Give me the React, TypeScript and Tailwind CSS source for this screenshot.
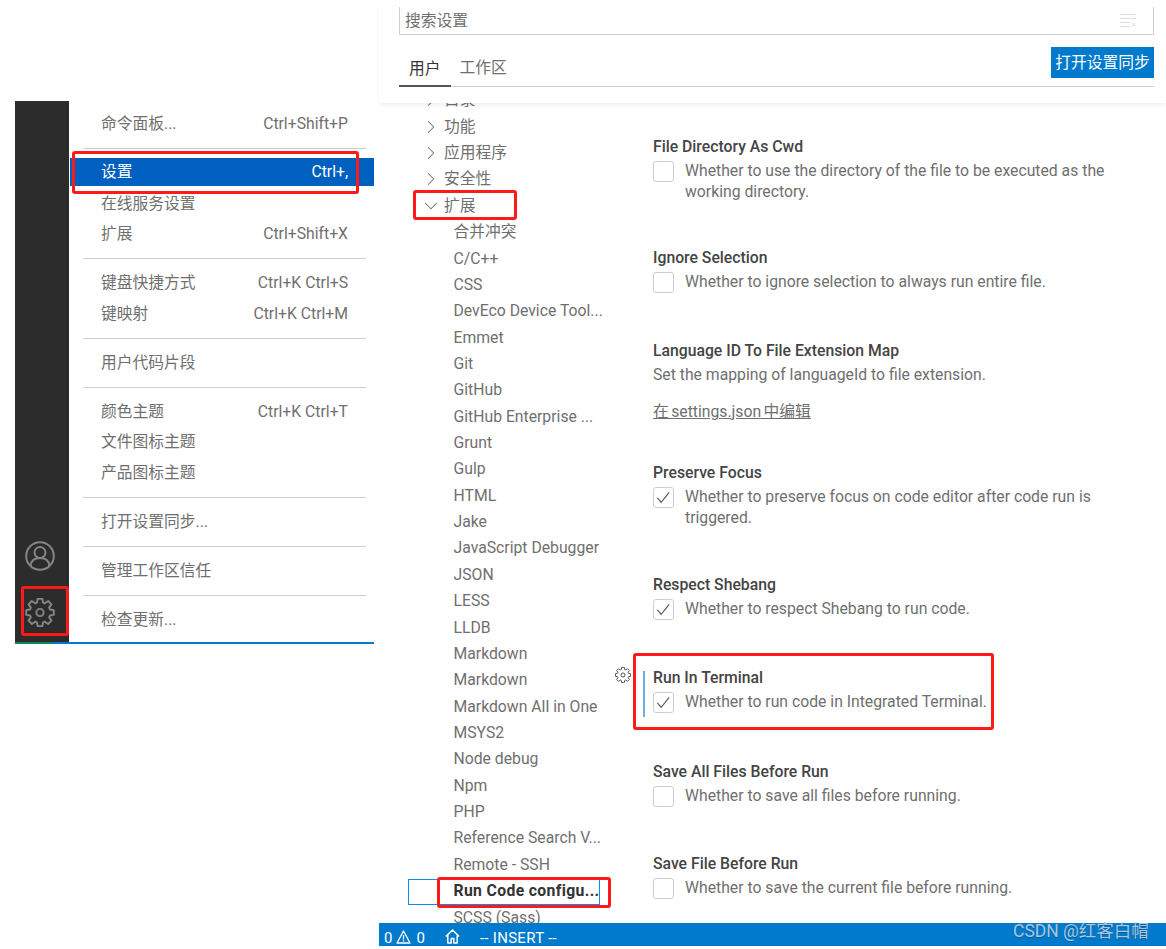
import { Fragment } from 'react'
import clsx from 'clsx'
import { ChevronRight, ChevronDown } from 'lucide-react'

const menuGroups = [
  [{ label: '命令面板...', keys: 'Ctrl+Shift+P' }],
  [
    { label: '设置', keys: 'Ctrl+,', active: true },
    { label: '在线服务设置' },
    { label: '扩展', keys: 'Ctrl+Shift+X' },
  ],
  [
    { label: '键盘快捷方式', keys: 'Ctrl+K Ctrl+S' },
    { label: '键映射', keys: 'Ctrl+K Ctrl+M' },
  ],
  [{ label: '用户代码片段' }],
  [
    { label: '颜色主题', keys: 'Ctrl+K Ctrl+T' },
    { label: '文件图标主题' },
    { label: '产品图标主题' },
  ],
  [{ label: '打开设置同步...' }],
  [{ label: '管理工作区信任' }],
  [{ label: '检查更新...' }],
]

const treeGroups = ['目录', '功能', '应用程序', '安全性']

const treeChildren = [
  '合并冲突',
  'C/C++',
  'CSS',
  'DevEco Device Tool...',
  'Emmet',
  'Git',
  'GitHub',
  'GitHub Enterprise ...',
  'Grunt',
  'Gulp',
  'HTML',
  'Jake',
  'JavaScript Debugger',
  'JSON',
  'LESS',
  'LLDB',
  'Markdown',
  'Markdown',
  'Markdown All in One',
  'MSYS2',
  'Node debug',
  'Npm',
  'PHP',
  'Reference Search V...',
  'Remote - SSH',
  'Run Code configu...',
  'SCSS (Sass)',
]

const settings = [
  {
    title: 'File Directory As Cwd',
    desc: 'Whether to use the directory of the file to be executed as the working directory.',
    height: 'h-[111px]',
    box: 'off',
  },
  {
    title: 'Ignore Selection',
    desc: 'Whether to ignore selection to always run entire file.',
    height: 'h-[93px]',
    box: 'off',
  },
  {
    title: 'Language ID To File Extension Map',
    desc: 'Set the mapping of languageId to file extension.',
    height: 'h-[122px]',
    link: '在 settings.json 中编辑',
  },
  {
    title: 'Preserve Focus',
    desc: 'Whether to preserve focus on code editor after code run is triggered.',
    height: 'h-[112px]',
    box: 'on',
  },
  {
    title: 'Respect Shebang',
    desc: 'Whether to respect Shebang to run code.',
    height: 'h-[93px]',
    box: 'on',
  },
  {
    title: 'Run In Terminal',
    desc: 'Whether to run code in Integrated Terminal.',
    height: 'h-[94px]',
    box: 'on',
    focused: true,
  },
  {
    title: 'Save All Files Before Run',
    desc: 'Whether to save all files before running.',
    height: 'h-[92px]',
    box: 'off',
  },
  {
    title: 'Save File Before Run',
    desc: 'Whether to save the current file before running.',
    height: 'h-[60px]',
    box: 'off',
  },
]

// 8 toothed cog outline, the shape of the editor's gear icon
function gearPath() {
  const pts: string[] = []
  for (let i = 0; i < 8; i++) {
    const a = (i * Math.PI) / 4
    const offsets: [number, number][] = [
      [-0.3, 8.6],
      [-0.17, 11.6],
      [0.17, 11.6],
      [0.3, 8.6],
    ]
    offsets.forEach(([d, r]) => {
      pts.push(`${(12 + r * Math.sin(a + d)).toFixed(2)} ${(12 - r * Math.cos(a + d)).toFixed(2)}`)
    })
  }
  return `M${pts.join('L')}Z`
}

function GearIcon({ className, width = 1.6 }: { className?: string; width?: number }) {
  return (
    <svg viewBox="0 0 24 24" fill="none" stroke="currentColor" strokeWidth={width} strokeLinejoin="round" className={className}>
      <path d={gearPath()} />
      <circle cx="12" cy="12" r="3" />
    </svg>
  )
}

function AccountIcon({ className }: { className?: string }) {
  return (
    <svg viewBox="0 0 30 30" fill="none" stroke="currentColor" strokeWidth="2" className={className}>
      <circle cx="15" cy="15" r="13.800" />
      <circle cx="15" cy="11.500" r="5.500" />
      <path d="M5.500 25c.5-5.500 4-8 9.500-8s9 2.500 9.500 8" />
    </svg>
  )
}

function ClearIcon() {
  return (
    <svg viewBox="0 0 16 13" fill="none" stroke="#dcdcdc" strokeWidth="1" className="w-4 h-[13px]">
      <path d="M0 .5h16M0 4.500h16M0 8.500h10M0 12.500h10M12 9l3.500 3.500M15.500 9 12 12.500" />
    </svg>
  )
}

function WarningIcon() {
  return (
    <svg viewBox="0 0 15 14" fill="none" stroke="white" strokeWidth="1.300" className="w-[15px] h-[14px]">
      <path d="M7.500 1 14 13H1z" strokeLinejoin="round" />
      <path d="M7.500 5v4.500M7.500 10.300v1.300" />
    </svg>
  )
}

function HomeIcon() {
  return (
    <svg viewBox="0 0 15 15" fill="none" stroke="white" strokeWidth="1.500" strokeLinejoin="round" className="w-[15px] h-[15px]">
      <path d="M.8 7.500 7.500 1l6.700 6.500M2.800 6v8h3.400V9.500h2.600V14h3.400V6" />
    </svg>
  )
}

function Checkbox({ checked }: { checked: boolean }) {
  return (
    <span className="shrink-0 w-[21px] h-[21px] border border-[#cecece] rounded-[3px] flex items-center justify-center">
      {checked && (
        <svg viewBox="0 0 20 20" fill="none" stroke="#5a5a5a" strokeWidth="1.200" className="w-[19px] h-[19px]">
          <path d="M3.500 10.500 7.500 15 16 4.500" />
        </svg>
      )}
    </span>
  )
}

function TreeRow({ label, open }: { label: string; open?: boolean }) {
  const Chevron = open ? ChevronDown : ChevronRight
  return (
    <div className="h-[26.37px] flex items-center pl-[41px] text-[#6f6f6f]">
      <Chevron className="w-[22px] h-[22px] shrink-0" strokeWidth={1.1} />
      <span className="ml-[2px]">{label}</span>
    </div>
  )
}

function Menu() {
  return (
    <div className="flex-1 pl-px pt-[8px] text-[#6f6f6f]">
      {menuGroups.map((group, i) => (
        <Fragment key={i}>
          {i > 0 && (
            <div className="h-[18.500px] flex items-center pl-[13px] pr-2">
              <div className="w-full h-px bg-[#cfcfcf]" />
            </div>
          )}
          {group.map(item => (
            <div
              key={item.label}
              className={clsx(
                'flex items-center justify-between pl-[31px] pr-[26px]',
                item.active ? 'h-[28px] mb-[2.500px] bg-[#0060c0] text-white' : 'h-[30.500px]'
              )}
            >
              <span>{item.label}</span>
              {item.keys && <span>{item.keys}</span>}
            </div>
          ))}
        </Fragment>
      ))}
    </div>
  )
}

function Setting({ item }: { item: (typeof settings)[number] }) {
  return (
    <div className={clsx('relative', item.height)}>
      {item.focused && (
        <>
          <GearIcon className="absolute left-[-38px] top-0 w-4 h-4 text-[#555]" width={1.5} />
          <div className="absolute left-[-10px] top-[4px] w-[2px] h-[46px] bg-[#6cb0e6]" />
        </>
      )}
      <div className="h-[22px] leading-[22px] font-medium text-[#444]">{item.title}</div>
      {item.box ? (
        <div className="flex items-start gap-[11px] mt-[3px]">
          <Checkbox checked={item.box === 'on'} />
          <p className="w-[430px] -mt-px leading-[21px] text-[#6f6f6f]">{item.desc}</p>
        </div>
      ) : (
        <>
          <p className="leading-[24px] mt-[1px] text-[#6f6f6f]">{item.desc}</p>
          <a className="block mt-[13px] leading-[24px] underline [word-spacing:-1.500px] text-[#6f6f6f]">{item.link}</a>
        </>
      )}
    </div>
  )
}

export default function App() {
  return (
    <div className="relative w-[1166px] h-[949px] overflow-hidden bg-white flex font-['Roboto','Noto_Sans_CJK_SC',sans-serif] text-[15.750px]">
      {/* Left: manage menu */}
      <div className="w-[379px] shrink-0 pl-[15px] pr-[5px] pt-[101px]">
        <div className="h-[541px] flex">
          <div className="w-[54px] bg-[#2c2c2c] flex flex-col items-center justify-end gap-[27px] pb-[15px] pr-[4px] text-[#858585]">
            <AccountIcon className="w-[30px] h-[30px]" />
            <GearIcon className="w-[30px] h-[29px]" />
          </div>
          <Menu />
        </div>
        <div className="h-[2px] bg-[#007acc] flex">
          <div className="w-[37px] bg-[#16825d]" />
        </div>
      </div>

      {/* Right: settings editor */}
      <div className="flex-1 flex flex-col">
        <header className="relative z-10 h-[103px] shrink-0 pl-5 pr-3 pt-[7px] bg-white shadow-[0_3px_4px_-1px_rgba(0,0,0,0.07)]">
          <div className="h-[28px] border-x border-b border-[#cecece] flex items-center justify-between pl-[5px] pr-[17px] text-[#6f6f6f]">
            <span>搜索设置</span>
            <ClearIcon />
          </div>
          <div className="h-[52px] flex items-end justify-between border-b border-[#cecece]">
            <div className="flex items-end">
              <div className="h-[34px] px-[10px] pb-px flex items-center border-b-2 border-[#555] -mb-px text-[#333]">用户</div>
              <div className="h-[34px] ml-[-1px] pl-[10px] pb-[2px] flex items-center text-[#6f6f6f]">工作区</div>
            </div>
            <button className="h-[31px] w-[103px] mb-[8px] bg-[#007acc] text-white text-center">打开设置同步</button>
          </div>
        </header>

        <main className="flex-1 min-h-0 overflow-hidden flex">
          <nav className="w-[274px] shrink-0 -mt-[16px]">
            {treeGroups.map(label => (
              <TreeRow key={label} label={label} />
            ))}
            <TreeRow label="扩展" open />
            {treeChildren.map((label, i) => (
              <div
                key={label + i}
                className={clsx(
                  'h-[26.37px] flex items-center pl-[74.500px]',
                  label.startsWith('Run Code') ? 'font-bold tracking-[0.35px] text-[#333]' : 'text-[#6f6f6f]'
                )}
              >
                <span className="whitespace-nowrap">{label}</span>
              </div>
            ))}
          </nav>
          <section className="flex-1 pt-[33px]">
            {settings.map(item => (
              <Setting key={item.title} item={item} />
            ))}
          </section>
        </main>

        <footer className="h-[23px] mb-[3px] shrink-0 bg-[#007acc] text-white flex items-center pl-[5px] pt-[8px] text-[15px]">
          <span>0</span>
          <span className="ml-[4px] -mt-[4px]"><WarningIcon /></span>
          <span className="ml-[5px]">0</span>
          <span className="ml-[20px] -mt-[4px]"><HomeIcon /></span>
          <span className="ml-[20px] tracking-[0.3px]">-- INSERT --</span>
        </footer>
      </div>

      {/* Selected tree row outline */}
      <div className="absolute left-[408px] top-[879px] w-[192px] h-[26px] border border-[#0090f1]" />

      {/* Red annotation boxes */}
      <div className="absolute left-[72px] top-[151px] w-[287px] h-[43px] border-[3px] border-[#ff1a1a] rounded-[3px]" />
      <div className="absolute left-[21px] top-[586px] w-[48px] h-[50px] border-[3px] border-[#ff1a1a] rounded-[3px]" />
      <div className="absolute left-[413px] top-[190px] w-[104px] h-[30px] border-[3px] border-[#ff1a1a] rounded-[3px]" />
      <div className="absolute left-[633px] top-[653px] w-[361px] h-[77px] border-[3px] border-[#ff1a1a] rounded-[3px]" />
      <div className="absolute left-[437px] top-[877px] w-[174px] h-[31px] border-[3px] border-[#ff1a1a] rounded-[3px]" />

      {/* Watermark */}
      <div className="absolute left-[1013px] top-[918px] text-[17.500px] text-[#a9c6dc] [text-shadow:0_1px_1px_rgba(0,0,0,0.25)] whitespace-nowrap">
        CSDN @红客白帽
      </div>
    </div>
  )
}
